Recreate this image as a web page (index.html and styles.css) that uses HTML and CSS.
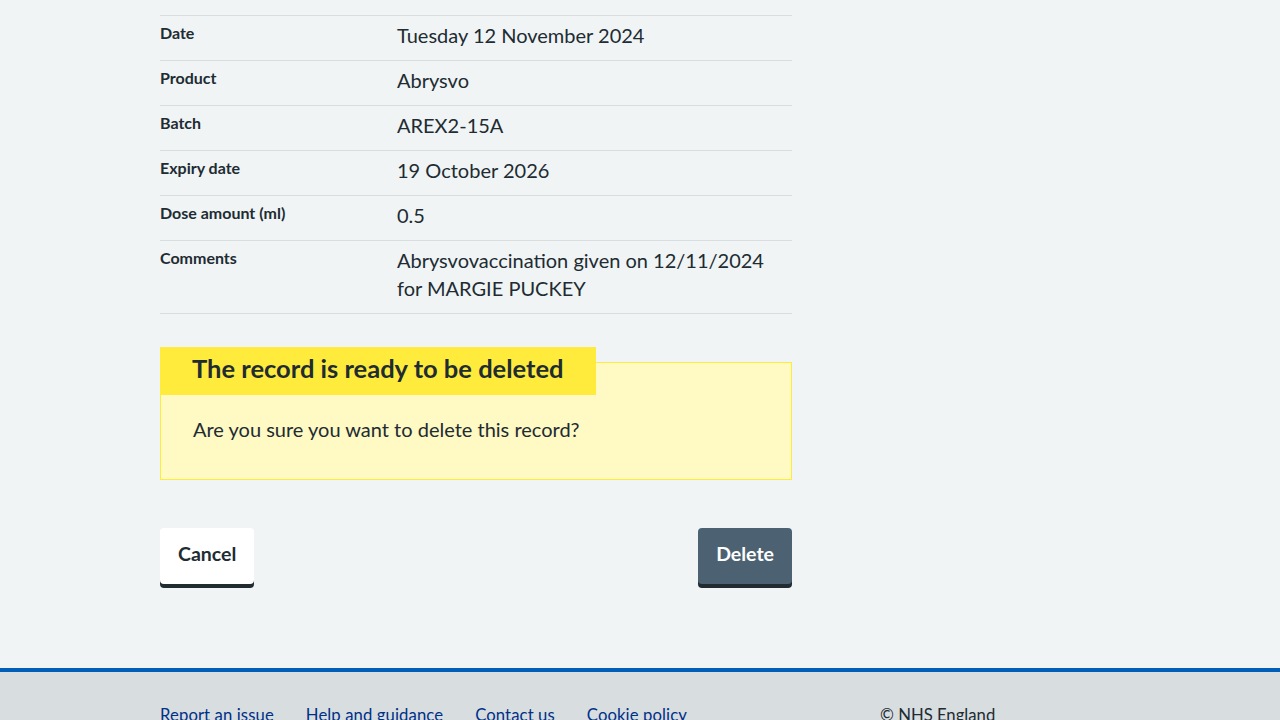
FILE: index.html
```html
<!DOCTYPE html>
<html lang="en">
<head>
<meta charset="utf-8">
<title>Delete record</title>
<link rel="stylesheet" href="styles.css">
</head>
<body>
<main class="container">
  <div class="column">
    <dl class="summary">
      <div class="summary-row"><dt class="summary-key">Date</dt><dd class="summary-value">Tuesday 12 November 2024</dd></div>
      <div class="summary-row"><dt class="summary-key">Product</dt><dd class="summary-value">Abrysvo</dd></div>
      <div class="summary-row"><dt class="summary-key">Batch</dt><dd class="summary-value">AREX2-15A</dd></div>
      <div class="summary-row"><dt class="summary-key">Expiry date</dt><dd class="summary-value">19 October 2026</dd></div>
      <div class="summary-row"><dt class="summary-key">Dose amount (ml)</dt><dd class="summary-value">0.5</dd></div>
      <div class="summary-row"><dt class="summary-key">Comments</dt><dd class="summary-value">Abrysvovaccination given on 12/11/2024 for MARGIE PUCKEY</dd></div>
    </dl>

    <div class="warning">
      <h3 class="warning-label">The record is ready to be deleted</h3>
      <p class="warning-text">Are you sure you want to delete this record?</p>
    </div>

    <div class="actions">
      <button class="button button-white" type="button">Cancel</button>
      <button class="button button-secondary" type="button">Delete</button>
    </div>
  </div>
</main>
<footer class="footer">
  <div class="footer-inner">
    <ul class="footer-links">
      <li><a href="#">Report an issue</a></li>
      <li><a href="#">Help and guidance</a></li>
      <li><a href="#">Contact us</a></li>
      <li><a href="#">Cookie policy</a></li>
    </ul>
    <p class="footer-copy">© NHS England</p>
  </div>
</footer>
</body>
</html>
```

FILE: styles.css
```css
* { box-sizing: border-box; }

html, body {
  margin: 0;
  padding: 0;
  background: #f0f4f5;
  color: #212b32;
  font-family: Lato, "Liberation Sans", sans-serif;
}

.container {
  width: 960px;
  margin: 0 auto;
  padding-top: 15px;
  padding-bottom: 80px;
}

.column {
  width: 632px;
}

.summary {
  margin: 0 0 48px;
  border-top: 1px solid #d8dde0;
}

.summary-row {
  display: grid;
  grid-template-columns: 237px 1fr;
  border-bottom: 1px solid #d8dde0;
  padding: 5px 0 11px;
}

.summary-key {
  margin: 0;
  font-size: 16px;
  line-height: 24px;
  font-weight: 700;
}

.summary-value {
  margin: 0;
  font-size: 20px;
  line-height: 28px;
  padding-right: 24px;
}

.warning {
  background: #fff9c4;
  border: 1px solid #ffeb3b;
  padding: 0 32px 36px;
}

.warning-label {
  display: inline-block;
  vertical-align: top;
  background: #ffeb3b;
  margin: -16px 0 0 -33px;
  padding: 5px 32px 11px;
  font-size: 25.5px;
  line-height: 32px;
  font-weight: 700;
}

.warning-text {
  margin: 20px 0 0;
  font-size: 20px;
  line-height: 28px;
}

.actions {
  display: flex;
  justify-content: space-between;
  margin-top: 48px;
}

.button {
  font-family: inherit;
  font-size: 19.5px;
  font-weight: 700;
  line-height: 28px;
  padding: 10px 16px 14px;
  border: 2px solid transparent;
  border-radius: 4px;
  box-shadow: 0 4px 0 #212b32;
  cursor: pointer;
  margin-bottom: 4px;
}

.button-white {
  background: #ffffff;
  color: #212b32;
}

.button-secondary {
  background: #4c6272;
  color: #ffffff;
}

.footer {
  background: #d8dde0;
  border-top: 4px solid #005eb8;
  padding-top: 31px;
  padding-bottom: 30px;
}

.footer-inner {
  width: 960px;
  margin: 0 auto;
  display: flex;
}

.footer-links {
  list-style: none;
  margin: 0;
  padding: 0;
  width: 720px;
  display: flex;
  gap: 32px;
}

.footer-links a {
  color: #003087;
  font-size: 16.7px;
  line-height: 24px;
  letter-spacing: 0.1px;
  text-decoration: none;
}

.footer-copy {
  margin: 0;
  font-size: 16.7px;
  line-height: 24px;
}
```
